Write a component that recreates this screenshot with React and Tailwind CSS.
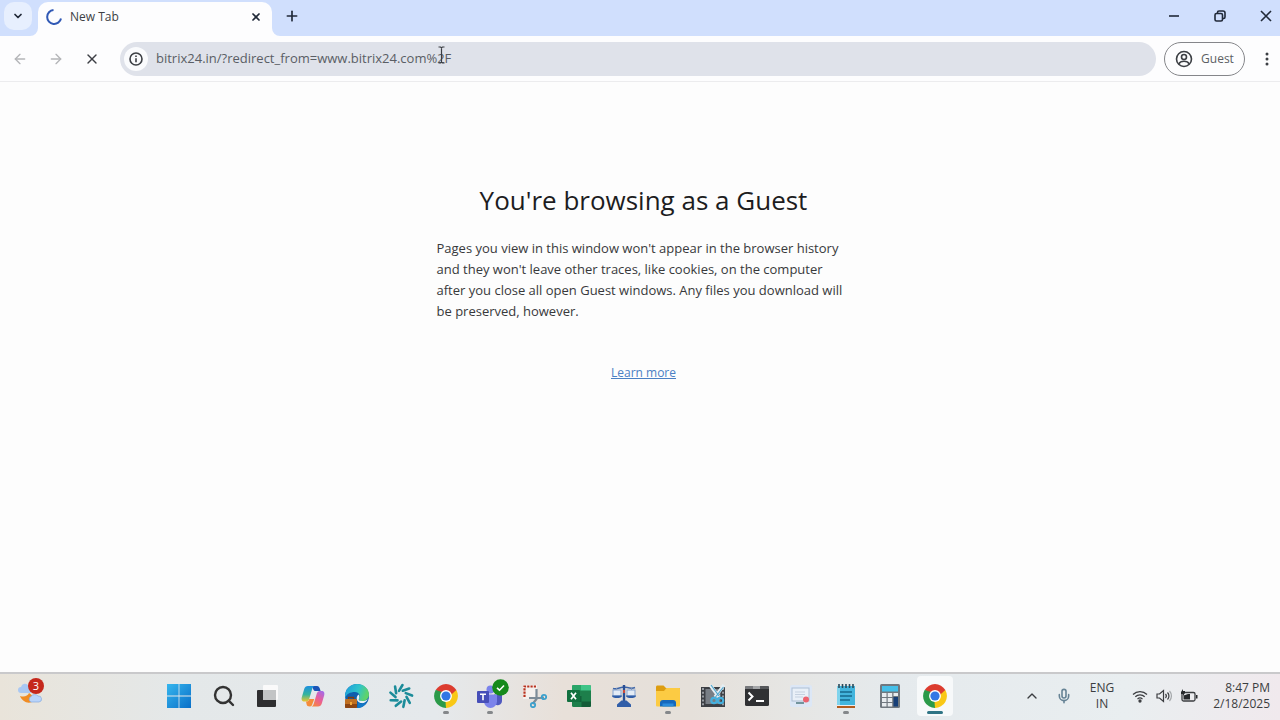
import { ArrowLeft, ArrowRight, ChevronDown, ChevronUp, Plus, X, Search, Mic } from "lucide-react";
import clsx from "clsx";

function StartIcon() {
  return (
    <svg width="24" height="24" viewBox="0 0 24 24">
      <defs>
        <linearGradient id="start" x1="0" y1="0" x2="1" y2="1">
          <stop offset="0" stopColor="#35b6ee" />
          <stop offset="1" stopColor="#0a6fc8" />
        </linearGradient>
      </defs>
      <path fill="url(#start)" d="M0 0h11.600v11.600H0zM12.400 0H24v11.600H12.400zM0 12.400h11.600V24H0zM12.400 12.400H24V24H12.400z" />
    </svg>
  );
}

function TaskViewIcon() {
  return (
    <svg width="24" height="24" viewBox="0 0 24 24">
      <rect x="7" y="1" width="15" height="15" rx="1" fill="#fafafa" />
      <path fill="#2e2e30" d="M2 6h5v9h13v7a1 1 0 0 1-1 1H2a1 1 0 0 1-1-1V7a1 1 0 0 1 1-1z" />
      <path fill="#c2c4c5" d="M7 6h13v10H7z" />
    </svg>
  );
}

function CopilotIcon() {
  return (
    <svg width="24" height="24" viewBox="0 0 24 24">
      <defs>
        <linearGradient id="cpA" x1="0" y1="0" x2="0" y2="1">
          <stop offset="0" stopColor="#1c8fe0" />
          <stop offset=".55" stopColor="#35b59c" />
          <stop offset="1" stopColor="#f0c62b" />
        </linearGradient>
        <linearGradient id="cpB" x1="0.8" y1="0" x2="0.2" y2="1">
          <stop offset="0" stopColor="#a56be8" />
          <stop offset=".5" stopColor="#ea5f97" />
          <stop offset="1" stopColor="#f7863c" />
        </linearGradient>
      </defs>
      <path fill="#1b55b8" d="M11 2h5c1.600 0 2.300 1 2.700 2.300l.9 2.700h-5c-1.300 0-2-.6-2.400-2z" />
      <path fill="url(#cpA)" d="M7 2h6.500c-1.500.5-2 1.800-2.400 3.200L8.200 15c-.5 1.700-1.400 2.600-3 2.600H3.500C.8 17.600.2 15.600.8 13.300L3.200 5C3.800 3 5 2 7 2z" />
      <path fill="url(#cpB)" d="M17 22.500h-6.500c1.500-.5 2-1.800 2.400-3.200l2.900-9.800c.5-1.700 1.400-2.600 3-2.600h1.700c2.700 0 3.300 2 2.700 4.300l-2.400 8.300c-.6 2-1.800 3-3.800 3z" />
      <path fill="#f58c3a" d="M5 17.600c2 0 2.800-.8 3.300-2.600h5l-1.900 5c-.4 1.500-1 2.500-2.400 2.500-2.500 0-3-1-3.400-2.300z" />
    </svg>
  );
}

function EdgeIcon() {
  return (
    <svg width="26" height="26" viewBox="0 0 26 26">
      <defs>
        <linearGradient id="edge" x1="0" y1="0" x2="1" y2="0.3">
          <stop offset="0" stopColor="#1c9ade" />
          <stop offset=".6" stopColor="#2fc4ca" />
          <stop offset="1" stopColor="#5fd36a" />
        </linearGradient>
      </defs>
      <circle cx="13" cy="13" r="12" fill="#0f5fae" />
      <path fill="url(#edge)" d="M1 12C2 5 7 1 13 1c7 0 12 5 12 10.500 0 4-3 6.500-6.500 6.500-3 0-4-1.500-3.500-2.500 2-3.500-.5-6.500-4-6.500C6 9 2.500 11 1 15z" />
      <path fill="#e8f3f6" d="M14.500 11.500c1.200 1.300 1 3 .4 4.200-.6 1.300.5 2.300 3.600 2.300 2 0 4-.6 5.500-2-2 4-5 4.500-7.500 4-3.500-.8-5.500-5.500-2-8.500z" />
      <path fill="#1279c8" d="M14 19c3 3 7 2 9-1-1.500 4.500-5.500 7-9.500 7z" />
      <rect x="1" y="16" width="12" height="9" rx="1" fill="#c06f20" />
      <path d="M4.500 16v-1.500h5V16" fill="none" stroke="#7c3d12" strokeWidth="1.400" />
      <path fill="#8d4513" d="M1 21h12v3a1 1 0 0 1-1 1H2a1 1 0 0 1-1-1z" />
      <path fill="#f2a838" d="M6 19h2v3H6z" />
    </svg>
  );
}

function SwirlIcon() {
  return (
    <svg width="26" height="26" viewBox="0 0 26 26" stroke="#1b8c9a" strokeWidth="2.600" strokeLinecap="round">
      {[0, 40, 80, 120, 160, 200, 240, 280, 320].map((deg) => (
        <path key={deg} d="M11 7.800L14.500 2" transform={`rotate(${deg} 13 13)`} />
      ))}
    </svg>
  );
}

function ChromeIcon() {
  return (
    <svg width="26" height="26" viewBox="0 0 48 48">
      <path fill="#dc3c2f" d="M24 24L4.950 13A22 22 0 0 1 43.050 13z" />
      <path fill="#f9c816" d="M24 24l19.050-11A22 22 0 0 1 24 46z" />
      <path fill="#2b9a49" d="M24 24v22A22 22 0 0 1 4.950 13z" />
      <path fill="#dc3c2f" d="M24 13h19.050L33 22z" />
      <path fill="#f9c816" d="M33.500 29.500L24 46l-1-13z" />
      <path fill="#2b9a49" d="M14.500 29.500L4.950 13 18 17z" />
      <circle cx="24" cy="24" r="11" fill="#fff" />
      <circle cx="24" cy="24" r="8.500" fill="#3277e4" />
    </svg>
  );
}

function TeamsIcon() {
  return (
    <span className="relative">
      <svg width="26" height="26" viewBox="0 0 26 26">
        <circle cx="20.500" cy="8" r="2.800" fill="#5b62c4" />
        <circle cx="13.500" cy="6.500" r="4" fill="#7b83eb" />
        <path fill="#5059c0" d="M17 11.500h8v6.500a4.500 4.500 0 0 1-8 2.500z" />
        <path fill="#7b83eb" d="M7 11.500h13v7a6.500 6.500 0 0 1-13 0z" />
        <rect x="0" y="8" width="12" height="12" rx="1" fill="#464eb8" />
        <path d="M3 11.200h6M6 11.200v6" stroke="#fff" strokeWidth="1.600" />
      </svg>
      <svg className="absolute -top-1 -right-1.5" width="17" height="17" viewBox="0 0 17 17">
        <circle cx="8.500" cy="8.500" r="8.300" fill="#168a1c" />
        <path d="M5 8.800l2.500 2.400L12 6.500" fill="none" stroke="#fff" strokeWidth="1.600" />
      </svg>
    </span>
  );
}

function SnipIcon() {
  return (
    <svg width="24" height="24" viewBox="0 0 24 24" fill="none">
      <rect x="0" y="1" width="14" height="14" fill="#f5f1ee" />
      <path d="M1.500 13V2.500H14" stroke="#b8321f" strokeWidth="2.200" strokeDasharray="2.200 1.100" />
      <path d="M13.500 5v10L9.500 20M6 14h11l4-.5" stroke="#7d8c98" strokeWidth="2.200" />
      <circle cx="10" cy="21" r="2.200" stroke="#3ba0cd" strokeWidth="1.800" />
      <circle cx="21" cy="13" r="2.200" stroke="#3ba0cd" strokeWidth="1.800" />
    </svg>
  );
}

function ExcelIcon() {
  return (
    <svg width="24" height="24" viewBox="0 0 24 24">
      <rect x="5" y="1" width="19" height="22" rx="1.500" fill="#1d7f4b" />
      <path fill="#2aa568" d="M5 2.500C5 1.700 5.700 1 6.500 1H14v5.500H5z" />
      <path fill="#3fc487" d="M14 1h8.500c.8 0 1.500.7 1.500 1.500v4H14z" />
      <path fill="#12613a" d="M5 12h9.500v6H5z" />
      <path fill="#145c38" d="M14.500 17.500H24v4c0 .8-.7 1.500-1.500 1.500H14.500z" />
      <rect x="0" y="6" width="13" height="12" rx="1" fill="#12703f" />
      <path d="M4 8.800l5 6.500M9 8.800l-5 6.500" stroke="#fff" strokeWidth="1.700" />
    </svg>
  );
}

function ScalesIcon() {
  return (
    <svg width="24" height="24" viewBox="0 0 24 24">
      <path d="M1 4.500c4 1.500 8-1.500 11-1.500s7 2.500 11 .5" fill="none" stroke="#3d65a8" strokeWidth="1.600" />
      <path fill="#284f96" d="M10.800 1h2.400v17h-2.400z" />
      <path d="M4.500 4v3M19.500 4v3" stroke="#7b8fb5" />
      <rect x="1" y="6" width="8" height="6" fill="#e4ecf6" stroke="#86a3d0" />
      <rect x="15" y="6" width="8" height="6" fill="#e4ecf6" stroke="#86a3d0" />
      <path fill="#315ea8" d="M0 11.500h10c0 2-2.500 2.500-5 2.500s-5-.5-5-2.500zM14 11.500h10c0 2-2.500 2.500-5 2.500s-5-.5-5-2.500zM9.500 16.500h5l4.500 4V23H5v-2.500z" />
      <path fill="#cf4a3b" d="M11 6h2v3h-2z" />
    </svg>
  );
}

function FolderIcon() {
  return (
    <svg width="26" height="24" viewBox="0 0 26 24">
      <path fill="#dd9d10" d="M1 3c0-.8.600-1.500 1.500-1.500h6L11 4h13c.600 0 1 .400 1 1v4H1z" />
      <path fill="#fccb43" d="M1 7h8L11.500 4H24c.600 0 1 .400 1 1v16c0 1-.600 1.500-1.500 1.500h-21C1.600 22.500 1 22 1 21z" />
      <path fill="#1468bd" d="M5 22.500V19a3 3 0 0 1 3-3h10a3 3 0 0 1 3 3v3.500z" />
      <path fill="#2a8cdc" d="M7.500 19.500h11v3h-11z" />
    </svg>
  );
}

function VideoCutIcon() {
  return (
    <svg width="26" height="26" viewBox="0 0 26 26" fill="none">
      <rect x="1" y="4" width="24" height="20" fill="#3c3f44" />
      <path d="M3 5v18M23 5v18" stroke="#a2a7ad" strokeWidth="1.800" strokeDasharray="2 1.800" />
      <rect x="5.500" y="6" width="15" height="15" fill="#787e85" />
      <path d="M10 2l9 12M24 2l-9 12" stroke="#e5eef3" strokeWidth="3.400" />
      <path d="M11 2l8 11M23.500 4l-8 10" stroke="#50a8cf" strokeWidth="1.200" />
      <circle cx="14" cy="17.500" r="2.700" stroke="#45b0de" strokeWidth="2.200" />
      <circle cx="20.500" cy="17.500" r="2.700" stroke="#45b0de" strokeWidth="2.200" />
    </svg>
  );
}

function TerminalIcon() {
  return (
    <svg width="26" height="22" viewBox="0 0 26 22">
      <rect x="1" y="1" width="24" height="20" rx="1.500" fill="#303133" />
      <path fill="#77797c" d="M2.500 1H9v3H1V2.500C1 1.700 1.700 1 2.500 1z" />
      <path fill="#a4a6a8" d="M9 1h7v3H9z" />
      <path fill="#56585b" d="M16 1h7.500c.800 0 1.500.700 1.500 1.500V4h-9z" />
      <path d="M4.500 7.500l4 4-4 4M12 16h8" fill="none" stroke="#fff" strokeWidth="2" />
    </svg>
  );
}

function RecorderIcon() {
  return (
    <svg width="24" height="24" viewBox="0 0 24 24">
      <rect x="1" y="1" width="22" height="22" rx="2" fill="#dce7f6" />
      <rect x="3" y="4" width="17" height="13" fill="#e9f0f8" stroke="#adbfd4" />
      <path d="M6 8h10M6 10.500h10M6 13h8" stroke="#c5d1e0" />
      <path d="M7 19h8" stroke="#517a80" strokeWidth="1.500" />
      <circle cx="17" cy="15.500" r="3" fill="#ec6370" />
    </svg>
  );
}

function NotepadIcon() {
  return (
    <svg width="22" height="26" viewBox="0 0 22 26">
      <rect x="2" y="3" width="18" height="19" fill="#43b5dd" />
      <path fill="#7fd3ec" d="M2 3h3v19H2z" />
      <path d="M5 9h12M5 13h12M5 17h10" stroke="#17698d" strokeWidth="1.500" />
      <path fill="#e9edef" d="M2 22h18v1H2z" />
      <path fill="#b35b1d" d="M2 23h18v2H2z" />
      <path d="M4 1v4M7.500 1v4M11 1v4M14.500 1v4M18 1v4" stroke="#28495a" strokeWidth="1.600" />
    </svg>
  );
}

function CalculatorIcon() {
  return (
    <svg width="22" height="26" viewBox="0 0 22 26">
      <rect x="1" y="1" width="20" height="24" rx="1.500" fill="#70787f" />
      <rect x="3" y="3" width="16" height="5.500" fill="#45bfe8" />
      <path fill="#e8ecef" d="M3 10h4.500v4H3zM8.700 10h4.500v4H8.700zM14.500 10H19v3h-4.500zM3 15h4.500v4H3zM8.700 15h4.500v4H8.700zM3 20h4.500v3.500H3zM8.700 20h4.500v3.500H8.700z" />
      <path fill="#163f78" d="M14.500 14H19v9.500h-4.500z" />
    </svg>
  );
}

const apps = [
  { name: "Start", icon: <StartIcon /> },
  { name: "Search", icon: <Search className="size-6 text-[#333]" strokeWidth={2.4} /> },
  { name: "Task View", icon: <TaskViewIcon /> },
  { name: "Copilot", icon: <CopilotIcon /> },
  { name: "Edge", icon: <EdgeIcon /> },
  { name: "Assistant", icon: <SwirlIcon /> },
  { name: "Chrome", icon: <ChromeIcon />, running: true },
  { name: "Teams", icon: <TeamsIcon />, running: true },
  { name: "Snipping Tool", icon: <SnipIcon /> },
  { name: "Excel", icon: <ExcelIcon /> },
  { name: "Scales", icon: <ScalesIcon /> },
  { name: "File Explorer", icon: <FolderIcon />, running: true },
  { name: "Video Editor", icon: <VideoCutIcon /> },
  { name: "Terminal", icon: <TerminalIcon /> },
  { name: "Recorder", icon: <RecorderIcon /> },
  { name: "Notepad", icon: <NotepadIcon />, running: true },
  { name: "Calculator", icon: <CalculatorIcon /> },
  { name: "Chrome Guest", icon: <ChromeIcon />, active: true },
];

function TabStrip() {
  return (
    <header className="flex h-9 items-stretch bg-[#d0dffd] text-[#202938]">
      <div className="flex w-[38px] items-center pl-1">
        <button aria-label="Search tabs" className="mb-1 flex size-7 items-center justify-center rounded-[10px] bg-[#e7effe]">
          <ChevronDown className="size-3" strokeWidth={3.5} />
        </button>
      </div>
      <div className="relative mt-0.5 flex w-[234px] items-center rounded-t-[10px] bg-[#fdfdfe] pr-2 pb-1 pl-2">
        {/* flared tab feet */}
        <svg className="absolute bottom-0 -left-2" width="8" height="8" viewBox="0 0 8 8">
          <path fill="#fdfdfe" d="M8 0v8H0a8 8 0 0 0 8-8z" />
        </svg>
        <svg className="absolute -right-2 bottom-0" width="8" height="8" viewBox="0 0 8 8">
          <path fill="#fdfdfe" d="M0 0v8h8a8 8 0 0 1-8-8z" />
        </svg>
        <svg width="16" height="16" viewBox="0 0 16 16" fill="none" stroke="#3159b5" strokeWidth="2">
          <path d="M7.500 1A7 7 0 1 0 15 9.500" />
        </svg>
        <span className="ml-2 text-xs text-[#3c3f44]">New Tab</span>
        <button aria-label="Close tab" className="ml-auto flex size-4 items-center justify-center">
          <X className="size-3" strokeWidth={3.5} />
        </button>
      </div>
      <button aria-label="New tab" className="ml-3 flex w-4 items-center justify-center pb-1">
        <Plus className="size-4 shrink-0" strokeWidth={2.5} />
      </button>
      <div className="ml-auto flex items-center gap-7 pr-[5px] pb-1">
        <button aria-label="Minimize" className="flex size-[18px] items-center justify-center">
          <svg width="12" height="12" viewBox="0 0 12 12" stroke="#202938" strokeWidth="1.600">
            <path d="M1 6h10" />
          </svg>
        </button>
        <button aria-label="Restore" className="flex size-[18px] items-center justify-center">
          <svg width="12" height="12" viewBox="0 0 12 12" fill="none" stroke="#202938" strokeWidth="1.600">
            <rect x="1" y="3.500" width="7.500" height="7.500" rx="1.500" />
            <path d="M3.500 3V2.500A1.500 1.500 0 0 1 5 1h4a2 2 0 0 1 2 2v4a1.500 1.500 0 0 1-1.500 1.500H9" />
          </svg>
        </button>
        <button aria-label="Close" className="flex size-[18px] items-center justify-center">
          <svg width="12" height="12" viewBox="0 0 12 12" stroke="#202938" strokeWidth="1.600">
            <path d="M1 1l10 10M11 1L1 11" />
          </svg>
        </button>
      </div>
    </header>
  );
}

function Toolbar() {
  return (
    <nav className="flex h-[46px] items-center border-b border-[#ececee] bg-[#fdfdfe] pr-[5px] pl-3">
      <button aria-label="Back" className="text-[#b4b5b8]">
        <ArrowLeft className="size-4" />
      </button>
      <button aria-label="Forward" className="ml-5 text-[#b4b5b8]">
        <ArrowRight className="size-4" />
      </button>
      <button aria-label="Stop" className="ml-5 text-[#3c3f44]">
        <X className="size-4" strokeWidth={2} />
      </button>
      <div className="relative ml-5 flex h-[34px] flex-1 items-center rounded-full bg-[#dfe2ea] pl-1">
        <button aria-label="Site information" className="flex size-6 items-center justify-center rounded-full bg-[#fafbfd]">
          <svg width="14" height="14" viewBox="0 0 14 14" fill="none" stroke="#3c3f44" strokeWidth="1.600">
            <circle cx="7" cy="7" r="6" />
            <path d="M7 6.200v4M7 3.500v1.500" />
          </svg>
        </button>
        <input
          aria-label="Address"
          className="ml-2 flex-1 bg-transparent text-[13px] font-medium text-[#5a5e65] outline-none"
          defaultValue="bitrix24.in/?redirect_from=www.bitrix24.com%2F"
        />
        {/* text cursor */}
        <svg className="absolute top-1 left-[317px]" width="9" height="18" viewBox="0 0 9 18" fill="none" stroke="#3a3d42" strokeWidth="1.200">
          <path d="M1.500 1h2l1 .8 1-.8h2M4.500 1.800v14.400M1.500 17h2l1-.8 1 .8h2" />
        </svg>
      </div>
      <button className="ml-2 flex h-[34px] w-[81px] items-center justify-center gap-2 rounded-full border border-[#85868a] text-xs text-[#5c5f64]">
        <svg width="18" height="18" viewBox="0 0 18 18" fill="none" stroke="#3c3f44" strokeWidth="1.600">
          <circle cx="9" cy="9" r="7.500" />
          <circle cx="9" cy="7" r="2.500" />
          <path d="M3.800 14c1-2 3-2.700 5.200-2.700s4.200.700 5.200 2.700" />
        </svg>
        Guest
      </button>
      <button aria-label="Menu" className="ml-[14px] flex w-4 justify-center">
        <svg width="4" height="16" viewBox="0 0 4 16" fill="#3c3f44">
          <circle cx="2" cy="3" r="1.500" />
          <circle cx="2" cy="8" r="1.500" />
          <circle cx="2" cy="13" r="1.500" />
        </svg>
      </button>
    </nav>
  );
}

function Taskbar() {
  return (
    <footer className="flex h-12 items-stretch border-t-2 border-[#c9c9cb] bg-[linear-gradient(90deg,#e9e4da_0%,#e4e8e9_14%,#e5e9ec_34%,#e8e0d9_44%,#e5e0da_54%,#e6e6e4_62%,#e5eaed_70%,#e9eef0_88%,#f0e9ed_100%)]">
      <div className="w-[157px] pl-4">
        <button aria-label="Weather" className="relative mt-1 flex size-8 items-center">
          <svg width="28" height="28" viewBox="0 0 28 28">
            <path fill="#a9c8f3" d="M5 13a3 3 0 0 1 0-6 4 4 0 0 1 7.500-1A3.500 3.500 0 0 1 13 13z" />
            <path fill="#f08c23" d="M4 16c4 1.500 8 0 9-3 5 3 6 7 3 9-5 2-10-1-12-6z" />
            <path fill="#b9d4fa" stroke="#84abe0" strokeWidth=".7" d="M15 22a3 3 0 0 1 0-5.500 4.500 4.500 0 0 1 7-.5 3 3 0 0 1 1 6z" />
          </svg>
          <span className="absolute top-0 right-1 flex size-4 items-center justify-center rounded-full bg-[#c5281c] text-[11px] leading-4 text-white">
            3
          </span>
        </button>
      </div>
      <div className="grid w-[800px] grid-cols-18">
        {apps.map((app) => (
          <button key={app.name} aria-label={app.name} className="relative flex items-center justify-center pb-0.5">
            <span className={clsx("flex h-10 items-center justify-center rounded", app.active ? "w-9 bg-[#f7f9fa]" : "w-8")}>
              {app.icon}
            </span>
            {app.running && <span className="absolute bottom-1.5 h-[3px] w-1.5 rounded-full bg-[#84878a]" />}
            {app.active && <span className="absolute bottom-1.5 h-[3px] w-4 rounded-full bg-[#2f7485]" />}
          </button>
        ))}
      </div>
      <div className="ml-auto flex items-center pr-2.5 pb-0.5 text-xs text-[#3b3d40]">
        <button aria-label="Show hidden icons">
          <ChevronUp className="size-4" />
        </button>
        <button aria-label="Microphone" className="ml-4 text-[#678496]">
          <Mic className="size-4" strokeWidth={2.4} />
        </button>
        <button className="ml-3 w-9 text-center leading-4">
          ENG
          <br />
          IN
        </button>
        <button aria-label="Network, volume and battery" className="ml-3 flex items-center gap-2">
          <svg width="16" height="16" viewBox="0 0 16 16" fill="none" stroke="#3b3d40" strokeWidth="1.300">
            <path d="M1 6.500a10 10 0 0 1 14 0M3.300 8.800a6.600 6.600 0 0 1 9.400 0M5.500 11.100a3.600 3.600 0 0 1 5 0" />
            <circle cx="8" cy="13" r="1" fill="#3b3d40" />
          </svg>
          <svg width="16" height="16" viewBox="0 0 16 16" fill="none" stroke="#3b3d40" strokeWidth="1.200">
            <path d="M1 6h2.500L7.500 2.500v11L3.500 10H1z" />
            <path d="M9.500 6a3 3 0 0 1 0 4M11.500 4.500a5 5 0 0 1 0 7" />
            <path d="M13.500 3a7.500 7.500 0 0 1 0 10" stroke="#a5a8ab" />
          </svg>
          <svg width="18" height="16" viewBox="0 0 18 16">
            <rect x="2" y="4.500" width="13" height="8.500" rx="1.500" fill="none" stroke="#3b3d40" strokeWidth="1.300" />
            <path fill="#26282b" d="M3.500 7.500L8 6h2v5.500H3.500zM16 7h1.500v3.500H16zM1 4l2-3v2h2v2L3 8V6H1z" />
          </svg>
        </button>
        <button className="ml-2 w-16 text-right leading-4">
          8:47 PM
          <br />
          2/18/2025
        </button>
      </div>
    </footer>
  );
}

function App() {
  return (
    <div className="flex min-h-screen flex-col bg-[#fdfdfd] font-['Open_Sans','Noto_Sans',sans-serif]">
      <TabStrip />
      <Toolbar />
      <main className="flex flex-1 flex-col items-center pt-[100px] pl-[7px]">
        <h1 className="text-[26px] leading-9 text-[#1d1d1f]">You're browsing as a Guest</h1>
        <p className="mt-5 w-[414px] text-[13px] leading-[21px] text-[#38393b]">
          Pages you view in this window won't appear in the browser history and they won't leave other traces, like
          cookies, on the computer after you close all open Guest windows. Any files you download will be preserved,
          however.
        </p>
        <a href="#learn-more" className="mt-10 text-xs leading-[21px] font-medium text-[#4a80c4] underline">
          Learn more
        </a>
      </main>
      <Taskbar />
    </div>
  );
}

export default App;
